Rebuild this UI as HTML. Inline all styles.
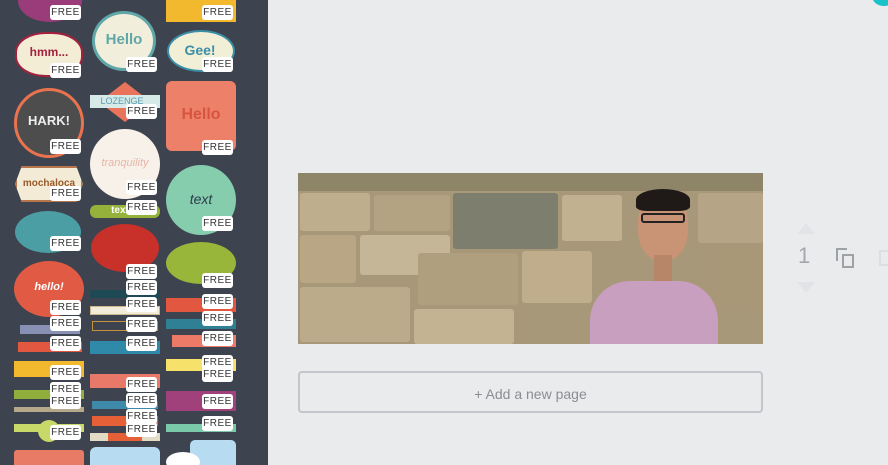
<!DOCTYPE html>
<html><head><style>
*{margin:0;padding:0;box-sizing:border-box}
body{width:888px;height:465px;overflow:hidden;background:#eaebed;font-family:"Liberation Sans",sans-serif;position:relative}
#side{position:absolute;left:0;top:0;width:268px;height:465px;background:#3e4350;overflow:hidden}
.s{position:absolute}
.f{position:absolute;width:31px;height:15px;background:#fff;border-radius:3px;font-size:10px;color:#333;text-align:center;line-height:15px;letter-spacing:.5px}
.t{position:absolute;font-weight:bold;text-align:center;white-space:nowrap}
.st{position:absolute;border-radius:3px}
</style></head><body>
<div id="side">
<div class="s" style="left:18px;top:-20px;width:64px;height:42px;border-radius:50%;background:#9b3c7a"></div>
<div class="s" style="left:15px;top:32px;width:68px;height:45px;border-radius:45%;background:#f3edd6;border:2px solid #a3213e"></div>
<div class="t" style="left:18px;top:45px;width:62px;font-size:12px;color:#a3213e">hmm...</div>
<div class="s" style="left:14px;top:88px;width:70px;height:70px;border-radius:50%;background:#4d4d4d;border:3px solid #e9734f"></div>
<div class="t" style="left:18px;top:113px;width:62px;font-size:13px;color:#eee">HARK!</div>
<div class="s" style="left:15px;top:166px;width:68px;height:36px;background:#f3ebd6;border:2px solid #b8764c;clip-path:polygon(10% 0,90% 0,100% 50%,90% 100%,10% 100%,0 50%)"></div>
<div class="t" style="left:18px;top:178px;width:62px;font-size:10px;color:#9a5a2a">mochaloca</div>
<div class="s" style="left:15px;top:211px;width:66px;height:42px;border-radius:50%;background:#4a9ea4"></div>
<div class="s" style="left:14px;top:261px;width:70px;height:56px;border-radius:50%;background:#e15a44"></div>
<div class="t" style="left:18px;top:281px;width:62px;font-size:11px;color:#fff;font-style:italic">hello!</div>
<div class="s" style="left:20px;top:325px;width:60px;height:9px;background:#8891b3"></div>
<div class="s" style="left:18px;top:342px;width:64px;height:10px;background:#e2573f"></div>
<div class="s" style="left:14px;top:361px;width:70px;height:16px;background:#f2b92f"></div>
<div class="s" style="left:14px;top:390px;width:70px;height:9px;background:#90ae3b"></div>
<div class="s" style="left:14px;top:407px;width:70px;height:5px;background:#b5a88b"></div>
<div class="s" style="left:14px;top:424px;width:70px;height:8px;background:#c8d96a"></div>
<div class="s" style="left:38px;top:420px;width:22px;height:22px;border-radius:50%;background:#c8d96a"></div>
<div class="s" style="left:14px;top:450px;width:70px;height:20px;background:#e87b66;border-radius:3px"></div>
<div class="s" style="left:92px;top:11px;width:64px;height:60px;border-radius:50%;background:#f1efdc;border:3px solid #5fa7a8"></div>
<div class="t" style="left:92px;top:31px;width:64px;font-size:15px;color:#5fa7a8">Hello</div>
<div class="s" style="left:99px;top:82px;width:52px;height:40px;background:#e9735b;clip-path:polygon(50% 0,100% 50%,50% 100%,0 50%)"></div>
<div class="s" style="left:90px;top:95px;width:70px;height:13px;background:#d6ebe8"></div>
<div class="t" style="left:92px;top:96px;width:60px;font-size:9px;color:#5a9ab0;font-weight:normal">LOZENGE</div>
<div class="s" style="left:90px;top:129px;width:70px;height:70px;border-radius:50%;background:#f8f1ea"></div>
<div class="t" style="left:90px;top:157px;width:70px;font-size:11px;color:#e6b5a8;font-weight:normal;font-style:italic">tranquility</div>
<div class="s" style="left:90px;top:205px;width:70px;height:13px;border-radius:6px;background:#95b33a"></div>
<div class="t" style="left:100px;top:205px;width:40px;font-size:10px;color:#fff">text</div>
<div class="s" style="left:91px;top:224px;width:68px;height:48px;border-radius:50%;background:#c8302a"></div>
<div class="s" style="left:90px;top:290px;width:70px;height:8px;background:#1d4a55"></div>
<div class="s" style="left:90px;top:306px;width:70px;height:9px;background:#f2ecd9;border:1px solid #c9b98f"></div>
<div class="s" style="left:92px;top:321px;width:66px;height:10px;border:1px solid #c6913d"></div>
<div class="s" style="left:90px;top:341px;width:70px;height:13px;background:#2e8aa8"></div>
<div class="s" style="left:90px;top:374px;width:70px;height:14px;background:#e87867"></div>
<div class="s" style="left:92px;top:401px;width:66px;height:8px;background:#3f8aab"></div>
<div class="s" style="left:92px;top:416px;width:66px;height:10px;background:#e66037"></div>
<div class="s" style="left:90px;top:433px;width:70px;height:8px;background:#e2dcc6"></div>
<div class="s" style="left:108px;top:433px;width:34px;height:8px;background:#e66037"></div>
<div class="s" style="left:90px;top:447px;width:70px;height:25px;background:#b7dcf1;border-radius:6px"></div>
<div class="s" style="left:166px;top:-8px;width:70px;height:30px;background:#f2b92f"></div>
<div class="s" style="left:167px;top:30px;width:68px;height:42px;border-radius:50%;background:#f2efd7;border:2px solid #3a8ea6"></div>
<div class="t" style="left:167px;top:42px;width:66px;font-size:14px;color:#3a8ea6">Gee!</div>
<div class="s" style="left:166px;top:81px;width:70px;height:70px;border-radius:6px;background:#ed8068"></div>
<div class="t" style="left:166px;top:106px;width:70px;font-size:16px;color:#d9543e">Hello</div>
<div class="s" style="left:166px;top:165px;width:70px;height:70px;border-radius:50%;background:#86cdae"></div>
<div class="t" style="left:166px;top:191px;width:70px;font-size:14px;color:#2c3a4c;font-weight:normal;font-style:italic">text</div>
<div class="s" style="left:166px;top:242px;width:70px;height:42px;border-radius:50%;background:#98b63a"></div>
<div class="s" style="left:166px;top:298px;width:70px;height:14px;background:#e2573f"></div>
<div class="s" style="left:166px;top:319px;width:70px;height:10px;background:#2f7f95"></div>
<div class="s" style="left:172px;top:335px;width:64px;height:12px;background:#ec7a66"></div>
<div class="s" style="left:166px;top:359px;width:70px;height:12px;background:#f6e26b"></div>
<div class="s" style="left:166px;top:391px;width:70px;height:20px;background:#a0417c"></div>
<div class="s" style="left:166px;top:424px;width:70px;height:8px;background:#7ac9a9"></div>
<div class="s" style="left:190px;top:440px;width:46px;height:30px;background:#b7dcf1;border-radius:5px"></div>
<div class="s" style="left:166px;top:452px;width:34px;height:20px;background:#fff;border-radius:50%"></div>
<div class="f" style="left:50px;top:5px">FREE</div>
<div class="f" style="left:50px;top:63px">FREE</div>
<div class="f" style="left:50px;top:139px">FREE</div>
<div class="f" style="left:50px;top:186px">FREE</div>
<div class="f" style="left:50px;top:236px">FREE</div>
<div class="f" style="left:50px;top:300px">FREE</div>
<div class="f" style="left:50px;top:316px">FREE</div>
<div class="f" style="left:50px;top:336px">FREE</div>
<div class="f" style="left:50px;top:365px">FREE</div>
<div class="f" style="left:50px;top:382px">FREE</div>
<div class="f" style="left:50px;top:394px">FREE</div>
<div class="f" style="left:50px;top:425px">FREE</div>
<div class="f" style="left:126px;top:57px">FREE</div>
<div class="f" style="left:126px;top:104px">FREE</div>
<div class="f" style="left:126px;top:180px">FREE</div>
<div class="f" style="left:126px;top:200px">FREE</div>
<div class="f" style="left:126px;top:264px">FREE</div>
<div class="f" style="left:126px;top:280px">FREE</div>
<div class="f" style="left:126px;top:297px">FREE</div>
<div class="f" style="left:126px;top:317px">FREE</div>
<div class="f" style="left:126px;top:336px">FREE</div>
<div class="f" style="left:126px;top:377px">FREE</div>
<div class="f" style="left:126px;top:393px">FREE</div>
<div class="f" style="left:126px;top:409px">FREE</div>
<div class="f" style="left:126px;top:422px">FREE</div>
<div class="f" style="left:202px;top:5px">FREE</div>
<div class="f" style="left:202px;top:57px">FREE</div>
<div class="f" style="left:202px;top:140px">FREE</div>
<div class="f" style="left:202px;top:216px">FREE</div>
<div class="f" style="left:202px;top:273px">FREE</div>
<div class="f" style="left:202px;top:294px">FREE</div>
<div class="f" style="left:202px;top:311px">FREE</div>
<div class="f" style="left:202px;top:331px">FREE</div>
<div class="f" style="left:202px;top:355px">FREE</div>
<div class="f" style="left:202px;top:367px">FREE</div>
<div class="f" style="left:202px;top:394px">FREE</div>
<div class="f" style="left:202px;top:416px">FREE</div>
</div>
<div class="s" style="left:872px;top:-14px;width:24px;height:20px;border-radius:50%;background:#19c2cb"></div>
<div class="s" style="left:298px;top:173px;width:465px;height:171px;background:#a8987a;overflow:hidden">
 <div class="s" style="left:0;top:0;width:465px;height:18px;background:#8e8468"></div>
 <div class="st" style="left:2px;top:20px;width:70px;height:38px;background:#bfae8e"></div>
 <div class="st" style="left:76px;top:22px;width:76px;height:36px;background:#b3a383"></div>
 <div class="st" style="left:155px;top:20px;width:105px;height:56px;background:#7d7e6e"></div>
 <div class="st" style="left:264px;top:22px;width:60px;height:46px;background:#c2b190"></div>
 <div class="st" style="left:2px;top:62px;width:56px;height:48px;background:#b8a684"></div>
 <div class="st" style="left:62px;top:62px;width:90px;height:40px;background:#c6b698"></div>
 <div class="st" style="left:120px;top:80px;width:100px;height:52px;background:#b09f7e"></div>
 <div class="st" style="left:224px;top:78px;width:70px;height:52px;background:#c0ad8b"></div>
 <div class="st" style="left:2px;top:114px;width:110px;height:55px;background:#bcab8a"></div>
 <div class="st" style="left:116px;top:136px;width:100px;height:35px;background:#c4b393"></div>
 <div class="st" style="left:400px;top:20px;width:65px;height:50px;background:#b5a485"></div>
 <div class="st" style="left:410px;top:75px;width:55px;height:60px;background:#a99877"></div>
 <div class="s" style="left:292px;top:108px;width:128px;height:70px;border-radius:40px 40px 0 0;background:#c99fc0"></div>
 <div class="s" style="left:340px;top:20px;width:50px;height:68px;border-radius:45%;background:#c99476"></div>
 <div class="s" style="left:338px;top:16px;width:54px;height:22px;border-radius:50% 50% 20% 20%;background:#1f1a18"></div>
 <div class="s" style="left:343px;top:40px;width:44px;height:10px;border:2px solid #222;border-radius:3px;border-top-width:2px"></div>
 <div class="s" style="left:356px;top:82px;width:18px;height:26px;background:#b78568"></div>
</div>
<div class="s" style="left:298px;top:371px;width:465px;height:42px;border:2px solid #c3c6ca;border-radius:4px;text-align:center;line-height:42px;font-size:14px;color:#8a8d93">+ Add a new page</div>
<div class="s" style="left:797px;top:223px;width:0;height:0;border-left:9px solid transparent;border-right:9px solid transparent;border-bottom:11px solid #e2e3e6"></div>
<div class="s" style="left:797px;top:282px;width:0;height:0;border-left:9px solid transparent;border-right:9px solid transparent;border-top:11px solid #e2e3e6"></div>
<div class="s" style="left:798px;top:243px;font-size:22px;color:#a4a7ac">1</div>
<div class="s" style="left:836px;top:248px;width:11px;height:13px;border:2px solid #9ea1a6;border-right:none;border-bottom:none"></div>
<div class="s" style="left:842px;top:254px;width:12px;height:14px;border:2px solid #9ea1a6;background:#eaebed"></div>
<div class="s" style="left:879px;top:250px;width:14px;height:16px;border:2px solid #dcdee1"></div>
</body></html>
